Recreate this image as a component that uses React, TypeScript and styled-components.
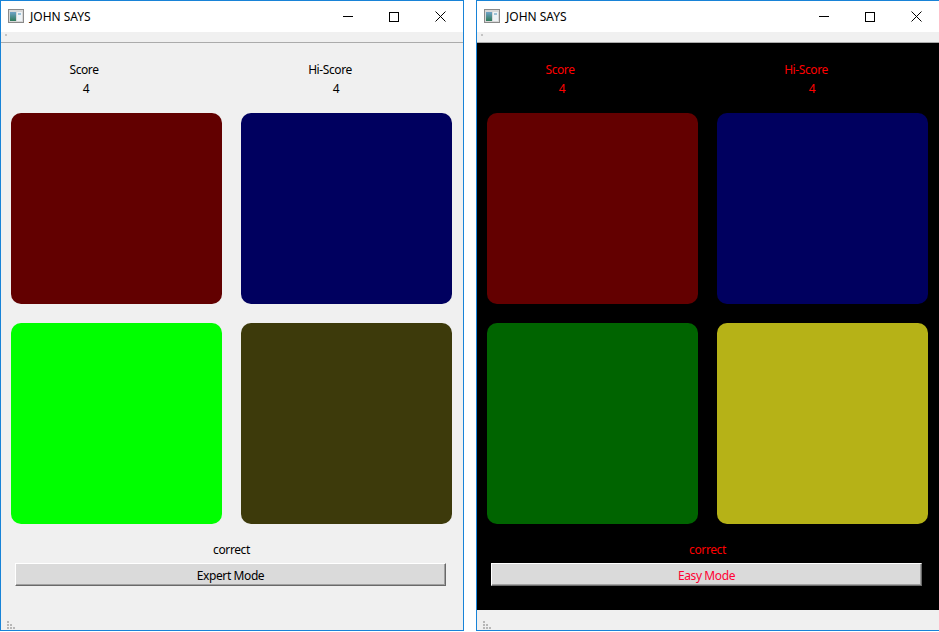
import React from "react";
import styled, { createGlobalStyle } from "styled-components";

const GlobalStyle = createGlobalStyle`
  html, body {
    margin: 0;
    padding: 0;
    background: #ffffff;
    overflow: hidden;
  }
  body {
    font-family: "Noto Sans", "Open Sans", "Liberation Sans", sans-serif;
  }
`;

const Desktop = styled.div`
  display: flex;
  gap: 12px;
  width: 940px;
  height: 632px;
`;

const Frame = styled.div`
  box-sizing: border-box;
  width: 464px;
  height: 631px;
  border: 1px solid #1883d7;
  display: flex;
  flex-direction: column;
  background: #f0f0f0;
  flex-shrink: 0;
`;

const TitleBar = styled.div`
  height: 31px;
  background: #ffffff;
  display: flex;
  align-items: center;
  flex-shrink: 0;
`;

const AppIcon = styled.svg`
  width: 16px;
  height: 14px;
  margin: 0 6px 1px 7px;
`;

const Title = styled.span`
  font-size: 12px;
  color: #000000;
  flex: 1;
  margin-bottom: 1px;
`;

const CtrlButton = styled.div`
  width: 46px;
  height: 30px;
  display: flex;
  align-items: center;
  justify-content: center;
`;

const MenuStrip = styled.div`
  height: 10px;
  background: #f0f0f0;
  border-bottom: 1px solid #ababab;
  position: relative;
  flex-shrink: 0;
`;

const MenuDot = styled.span`
  position: absolute;
  left: 4px;
  top: 2px;
  width: 2px;
  height: 2px;
  background: #c4c4c4;
`;

const Body = styled.div<{ $dark: boolean }>`
  flex: 1;
  background: ${(p) => (p.$dark ? "#000000" : "#f0f0f0")};
  display: flex;
  flex-direction: column;
  padding: 18px 0 0 10px;
  letter-spacing: -0.4px;
`;

const ScoreRow = styled.div`
  display: flex;
  font-size: 12px;
  line-height: 17px;
`;

const ScoreCol = styled.div<{ $offset: number; $dark: boolean }>`
  width: 100px;
  flex-shrink: 0;
  margin-left: ${(p) => p.$offset}px;
  display: flex;
  flex-direction: column;
  align-items: center;
  color: ${(p) => (p.$dark ? "#ff0000" : "#000000")};
`;

const ScoreValue = styled.span<{ $shift: number }>`
  margin-top: 2px;
  padding-left: ${(p) => p.$shift}px;
`;

const PadGrid = styled.div`
  display: grid;
  grid-template-columns: 211px 211px;
  grid-template-rows: 191px 201px;
  column-gap: 19px;
  row-gap: 19px;
  margin-top: 16px;
`;

const Pad = styled.div<{ $color: string }>`
  background: ${(p) => p.$color};
  border-radius: 10px;
`;

const Status = styled.div<{ $dark: boolean }>`
  width: 441px;
  text-align: center;
  font-size: 12px;
  line-height: 17px;
  margin-top: 17px;
  color: ${(p) => (p.$dark ? "#ff0000" : "#000000")};
`;

const ModeButton = styled.div<{ $dark: boolean }>`
  box-sizing: border-box;
  margin: 5px 0 0 4px;
  width: 431px;
  height: 23px;
  padding-top: 1px;
  background: #dadada;
  border: 1px solid;
  border-color: #ffffff #696969 #696969 #ffffff;
  box-shadow: inset -1px -1px 0 #a0a0a0;
  display: flex;
  align-items: center;
  justify-content: center;
  font-size: 12px;
  color: ${(p) => (p.$dark ? "#ff0033" : "#000000")};
`;

const Footer = styled.div`
  height: 19px;
  background: #f0f0f0;
  display: flex;
  align-items: flex-end;
  padding: 0 0 1px 6px;
  flex-shrink: 0;
`;

const Grip = () => (
  <svg width="8" height="8" viewBox="0 0 8 8">
    {[
      [0, 0],
      [0, 3],
      [3, 3],
      [0, 6],
      [3, 6],
      [6, 6],
    ].map(([x, y]) => (
      <rect key={`${x}-${y}`} x={x} y={y} width="2" height="2" fill="#b8b8b8" />
    ))}
  </svg>
);

const WindowIcon = () => (
  <AppIcon viewBox="0 0 16 14">
    <defs>
      <linearGradient id="wg" x1="0" y1="0" x2="0" y2="1">
        <stop offset="0" stopColor="#6fa3c8" />
        <stop offset="1" stopColor="#2f7a5a" />
      </linearGradient>
    </defs>
    <rect x="0.5" y="0.5" width="15" height="13" fill="#d8d8d8" stroke="#8a8a8a" />
    <rect x="2" y="3" width="6" height="9" fill="url(#wg)" />
    <rect x="9" y="3" width="5" height="9" fill="#eef3f7" />
    <rect x="10" y="4" width="3" height="2" fill="#9fc3d8" />
  </AppIcon>
);

const Controls = () => (
  <>
    <CtrlButton>
      <svg width="10" height="10" viewBox="0 0 10 10">
        <line x1="0" y1="4.5" x2="10" y2="4.5" stroke="#000" strokeWidth="1" />
      </svg>
    </CtrlButton>
    <CtrlButton>
      <svg width="10" height="10" viewBox="0 0 10 10">
        <rect x="0.5" y="0.5" width="9" height="9" fill="none" stroke="#000" strokeWidth="1" />
      </svg>
    </CtrlButton>
    <CtrlButton>
      <svg width="11" height="11" viewBox="0 0 11 11">
        <path d="M0.5 0.5 L10.5 10.5 M10.5 0.5 L0.5 10.5" stroke="#000" strokeWidth="1" />
      </svg>
    </CtrlButton>
  </>
);

interface GameWindowProps {
  dark: boolean;
  pads: string[];
  mode: string;
}

const GameWindow = ({ dark, pads, mode }: GameWindowProps) => (
  <Frame>
    <TitleBar>
      <WindowIcon />
      <Title>JOHN SAYS</Title>
      <Controls />
    </TitleBar>
    <MenuStrip>
      <MenuDot />
    </MenuStrip>
    <Body $dark={dark}>
      <ScoreRow>
        <ScoreCol $offset={23} $dark={dark}>
          <span>Score</span>
          <ScoreValue $shift={4}>4</ScoreValue>
        </ScoreCol>
        <ScoreCol $offset={146} $dark={dark}>
          <span>Hi-Score</span>
          <ScoreValue $shift={12}>4</ScoreValue>
        </ScoreCol>
      </ScoreRow>
      <PadGrid>
        {pads.map((c, i) => (
          <Pad key={i} $color={c} />
        ))}
      </PadGrid>
      <Status $dark={dark}>correct</Status>
      <ModeButton $dark={dark}>{mode}</ModeButton>
    </Body>
    <Footer>
      <Grip />
    </Footer>
  </Frame>
);

export default function App() {
  return (
    <>
      <GlobalStyle />
      <Desktop>
        <GameWindow
          dark={false}
          pads={["#620000", "#00005f", "#00ff00", "#3d3a0b"]}
          mode="Expert Mode"
        />
        <GameWindow
          dark={true}
          pads={["#630000", "#00005f", "#006400", "#b6b217"]}
          mode="Easy Mode"
        />
      </Desktop>
    </>
  );
}
